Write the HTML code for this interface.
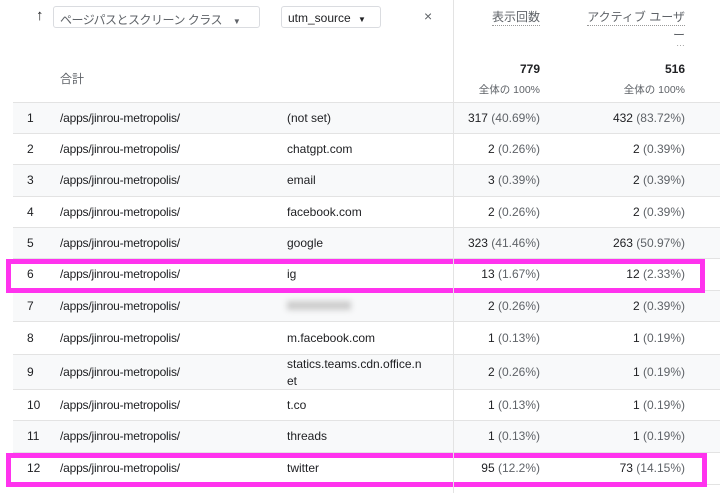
<!DOCTYPE html>
<html><head><meta charset="utf-8"><style>
*{margin:0;padding:0;box-sizing:border-box}
body{width:720px;height:493px;background:#fff;font-family:"Liberation Sans","Noto Sans CJK JP",sans-serif;position:relative;overflow:hidden;color:#202124;font-size:12px}
.a{position:absolute;white-space:nowrap}
.row{position:absolute;left:13px;width:707px;border-bottom:1px solid #e3e3e3}
.g{background:#f8f9fa}
.row span{position:absolute;white-space:nowrap}
.p{color:#5f6368}
.mag{position:absolute;border:5px solid #ff33ee}
.dd{position:absolute;border:1px solid #dadce0;border-radius:3px;height:22px;font-size:12px;color:#5f6368;padding:4px 6px;white-space:nowrap;overflow:hidden}
</style></head><body>
<div class="a" style="left:453px;top:0;width:1px;height:493px;background:#e3e3e3;z-index:1"></div>
<div class="a" style="left:36px;top:7px;font-size:15px;font-weight:bold">↑</div>
<div class="dd" style="left:53px;top:6px;width:207px;letter-spacing:-0.5px">ページパスとスクリーン クラス <span style="font-size:8px;margin-left:8px">▼</span></div>
<div class="dd" style="left:281px;top:6px;width:100px;color:#202124">utm_source <span style="font-size:8px;margin-left:4px">▼</span></div>
<div class="a" style="left:424px;top:8px;font-size:14px;color:#5f6368">×</div>
<div class="a" style="right:180px;top:8px;color:#5f6368;border-bottom:1px dotted #999">表示回数</div>
<div class="a" style="right:35px;top:8px;color:#5f6368;border-bottom:1px dotted #999">アクティブ ユーザ</div>
<div class="a" style="right:35px;top:26px;color:#5f6368">ー</div>
<div class="a" style="right:35px;top:38px;color:#999;font-size:9px">…</div>
<div class="a" style="left:60px;top:70px;color:#5f6368">合計</div>
<div class="a" style="right:180px;top:62px;font-weight:bold;font-size:12px">779</div>
<div class="a" style="right:180px;top:82px;color:#5f6368;font-size:10.5px">全体の 100%</div>
<div class="a" style="right:35px;top:62px;font-weight:bold;font-size:12px">516</div>
<div class="a" style="right:35px;top:82px;color:#5f6368;font-size:10.5px">全体の 100%</div>
<div class="a" style="left:13px;top:102px;width:707px;height:1px;background:#e3e3e3"></div>
<div id="rows"></div>
<script>
const d=[["1","(not set)","317","40.69%","432","83.72%"],["2","chatgpt.com","2","0.26%","2","0.39%"],["3","email","3","0.39%","2","0.39%"],["4","facebook.com","2","0.26%","2","0.39%"],["5","google","323","41.46%","263","50.97%"],["6","ig","13","1.67%","12","2.33%"],["7","","2","0.26%","2","0.39%"],["8","m.facebook.com","1","0.13%","1","0.19%"],["9","statics.teams.cdn.office.n<br>et","2","0.26%","1","0.19%"],["10","t.co","1","0.13%","1","0.19%"],["11","threads","1","0.13%","1","0.19%"],["12","twitter","95","12.2%","73","14.15%"]];
const tops=[103,134,165,197,228,259,291,322,355,390,421,453,485];
let h="";
d.forEach((r,i)=>{const t=tops[i],ht=tops[i+1]-t,c=ht/2-8;
h+=`<div class="row ${i%2==0?'g':''}" style="top:${t}px;height:${ht}px">
<span style="left:14px;top:${c}px">${r[0]}</span>
<span style="left:47px;top:${c}px;letter-spacing:-0.2px">/apps/jinrou-metropolis/</span>
<span style="left:274px;top:${i==8?1:c}px;line-height:${i==8?'17px':'normal'}">${r[1]||'<span style="position:static;display:inline-block;width:64px;height:9px;background:#ccc;filter:blur(3px)"></span>'}</span>
<span style="right:180px;top:${c}px">${r[2]} <span class="p" style="position:static">(${r[3]})</span></span>
<span style="right:35px;top:${c}px">${r[4]} <span class="p" style="position:static">(${r[5]})</span></span></div>`});
h+='<div class="mag" style="left:6px;top:259px;width:699px;height:34px"></div><div class="mag" style="left:6px;top:453px;width:701px;height:34px"></div>';
document.getElementById("rows").innerHTML=h;
</script>
</body></html>
